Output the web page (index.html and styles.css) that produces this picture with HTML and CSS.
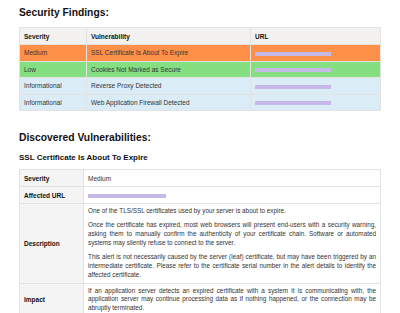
FILE: index.html
```html
<!DOCTYPE html>
<html>
<head>
<meta charset="utf-8">
<link rel="stylesheet" href="styles.css">
</head>
<body>
<div class="page">
  <h1 class="h1">Security Findings:</h1>
  <table class="findings">
    <colgroup><col class="c1"><col class="c2"><col class="c3"></colgroup>
    <thead>
      <tr><th>Severity</th><th>Vulnerability</th><th>URL</th></tr>
    </thead>
    <tbody>
      <tr class="medium"><td>Medium</td><td>SSL Certificate Is About To Expire</td><td><span class="redact r1"></span></td></tr>
      <tr class="low"><td>Low</td><td>Cookies Not Marked as Secure</td><td><span class="redact r1"></span></td></tr>
      <tr class="info"><td>Informational</td><td>Reverse Proxy Detected</td><td><span class="redact r1"></span></td></tr>
      <tr class="info"><td>Informational</td><td>Web Application Firewall Detected</td><td><span class="redact r1"></span></td></tr>
    </tbody>
  </table>

  <h1 class="h1 h1b">Discovered Vulnerabilities:</h1>
  <h2 class="h2">SSL Certificate Is About To Expire</h2>
  <table class="detail">
    <colgroup><col class="l"><col></colgroup>
    <tr><th>Severity</th><td>Medium</td></tr>
    <tr><th>Affected URL</th><td><span class="redact r2"></span></td></tr>
    <tr class="desc"><th>Description</th><td>
      <p>One of the TLS/SSL certificates used by your server is about to expire.</p>
      <p>Once the certificate has expired, most web browsers will present end-users with a security warning, asking them to manually confirm the authenticity of your certificate chain. Software or automated systems may silently refuse to connect to the server.</p>
      <p>This alert is not necessarily caused by the server (leaf) certificate, but may have been triggered by an intermediate certificate. Please refer to the certificate serial number in the alert details to identify the affected certificate.</p>
    </td></tr>
    <tr class="desc"><th>Impact</th><td>
      <p>If an application server detects an expired certificate with a system it is communicating with, the application server may continue processing data as if nothing happened, or the connection may be abruptly terminated.</p>
    </td></tr>
  </table>
</div>
</body>
</html>
```

FILE: styles.css
```css
html, body {
  margin: 0;
  padding: 0;
  background: #ffffff;
}
body {
  font-family: "Liberation Sans", Arial, sans-serif;
  color: #222;
}
.page {
  padding: 0 19px;
}
.h1 {
  font-size: 10.3px;
  font-weight: bold;
  line-height: 12px;
  margin: 0;
  padding-top: 7px;
  color: #111;
}
.h1b {
  padding-top: 21px;
}
.h2 {
  font-size: 8px;
  font-weight: bold;
  line-height: 10px;
  margin: 9px 0 0 0;
  color: #111;
}
table {
  border-collapse: collapse;
  width: 100%;
  table-layout: fixed;
}
.findings {
  margin-top: 8px;
}
.findings .c1 { width: 67px; }
.findings .c2 { width: 164px; }
td, th {
  border: 1px solid #e2e2e2;
  font-size: 6.5px;
  text-align: left;
  padding: 0 4px;
  vertical-align: middle;
}
.findings th {
  background: #f2f1f0;
  height: 16px;
  font-weight: bold;
  color: #111;
}
.findings td {
  height: 15.5px;
  color: #333;
}
.medium td { background: #ff9047; }
.low td { background: #84df80; }
.info td { background: #daecf6; }
.redact {
  display: inline-block;
  height: 4px;
  background: #c6b9e8;
  vertical-align: middle;
}
.r1 { width: 76px; }
.r2 { width: 78px; }
.detail {
  margin-top: 6px;
}
.detail .l { width: 64px; }
.detail th {
  background: #f4f4f4;
  font-weight: bold;
  color: #111;
  height: 16px;
}
.detail td {
  height: 16px;
  color: #333;
}
.desc td {
  padding: 3px 4px 3px 4px;
  text-align: justify;
  font-size: 6.35px;
  line-height: 8.8px;
}
.desc p {
  margin: 0 0 5.5px 0;
}
.desc p:last-child {
  margin-bottom: 0;
}
```
